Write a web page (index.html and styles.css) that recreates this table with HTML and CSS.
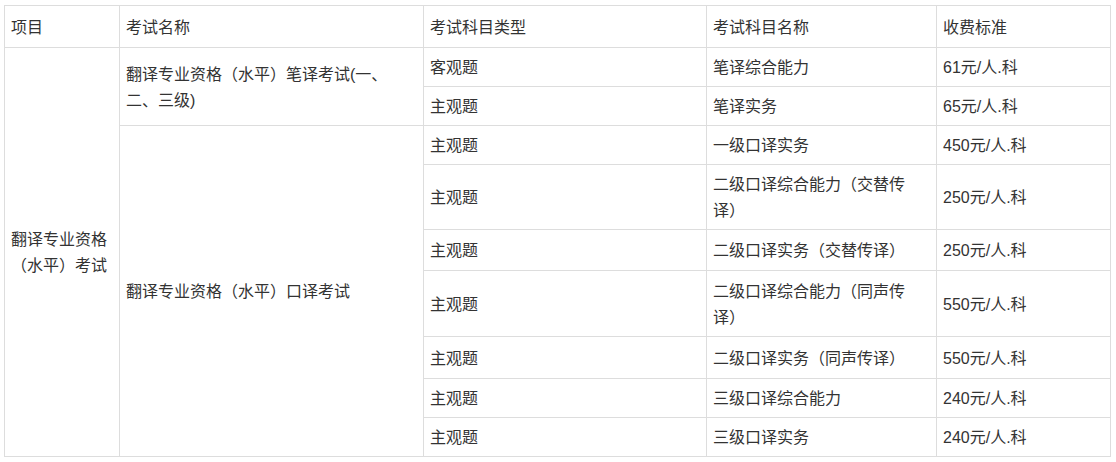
FILE: index.html
```html
<!DOCTYPE html>
<html lang="zh-CN">
<head>
<meta charset="utf-8">
<title>收费标准</title>
<link rel="stylesheet" href="styles.css">
</head>
<body>
<table class="fee-table">
  <colgroup>
    <col class="c1"><col class="c2"><col class="c3"><col class="c4"><col class="c5">
  </colgroup>
  <thead>
    <tr class="h42">
      <th>项目</th><th>考试名称</th><th>考试科目类型</th><th>考试科目名称</th><th>收费标准</th>
    </tr>
  </thead>
  <tbody>
    <tr class="h39">
      <td rowspan="10">翻译专业资格（水平）考试</td>
      <td rowspan="2">翻译专业资格（水平）笔译考试(一、<br>二、三级)</td>
      <td>客观题</td><td>笔译综合能力</td><td>61元/人.科</td>
    </tr>
    <tr class="h39">
      <td>主观题</td><td>笔译实务</td><td>65元/人.科</td>
    </tr>
    <tr class="h39">
      <td rowspan="8">翻译专业资格（水平）口译考试</td>
      <td>主观题</td><td>一级口译实务</td><td>450元/人.科</td>
    </tr>
    <tr class="h65">
      <td>主观题</td><td>二级口译综合能力（交替传<br>译）</td><td>250元/人.科</td>
    </tr>
    <tr class="h41">
      <td>主观题</td><td>二级口译实务（交替传译）</td><td>250元/人.科</td>
    </tr>
    <tr class="h66">
      <td>主观题</td><td>二级口译综合能力（同声传<br>译）</td><td>550元/人.科</td>
    </tr>
    <tr class="h42">
      <td>主观题</td><td>二级口译实务（同声传译）</td><td>550元/人.科</td>
    </tr>
    <tr class="h39">
      <td>主观题</td><td>三级口译综合能力</td><td>240元/人.科</td>
    </tr>
    <tr class="h39">
      <td>主观题</td><td>三级口译实务</td><td>240元/人.科</td>
    </tr>
  </tbody>
</table>
</body>
</html>
```
FILE: styles.css
```css
html, body {
  margin: 0;
  background: #fff;
}
body {
  padding: 5px 0 0 4px;
  font-family: "Liberation Sans", "Noto Sans CJK SC", sans-serif;
  font-size: 16px;
  color: #333;
}
.fee-table {
  border-collapse: collapse;
  table-layout: fixed;
  width: 1106px;
}
.c1 { width: 115px; }
.c2 { width: 304px; }
.c3 { width: 283px; }
.c4 { width: 230px; }
.c5 { width: 174px; }
.fee-table th,
.fee-table td {
  border: 1px solid #ddd;
  padding: 2px 7px 0 6px;
  line-height: 26px;
  text-align: left;
  vertical-align: middle;
  font-weight: normal;
}
.h39 { height: 39px; }
.h41 { height: 41px; }
.h42 { height: 42px; }
.h65 { height: 65px; }
.h66 { height: 66px; }
```
